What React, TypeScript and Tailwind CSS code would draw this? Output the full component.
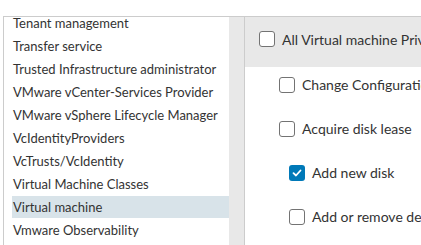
import React from "react";

const items = [
  "Tenant management",
  "Transfer service",
  "Trusted Infrastructure administrator",
  "VMware vCenter-Services Provider",
  "VMware vSphere Lifecycle Manager",
  "VcIdentityProviders",
  "VcTrusts/VcIdentity",
  "Virtual Machine Classes",
  "Virtual machine",
  "Vmware Observability",
];

function Box({ checked = false }: { checked?: boolean }) {
  if (checked) {
    return (
      <div className="w-[16px] h-[16px] shrink-0 rounded-[3px] bg-[#0079b8] flex items-center justify-center">
        <svg width="10" height="8" viewBox="0 0 10 8" fill="none">
          <path d="M1.5 4.2 L4 6.5 L8.5 1.5" stroke="white" strokeWidth="1.8" strokeLinecap="round" strokeLinejoin="round" />
        </svg>
      </div>
    );
  }
  return <div className="w-[16px] h-[16px] shrink-0 rounded-[3px] border border-[#737373] bg-white" />;
}

export default function App() {
  return (
    <div
      className="w-[421px] h-[245px] bg-white overflow-hidden pt-[16px] pl-[3px] text-[#333]"
      style={{ fontFamily: "Lato, 'Noto Sans', sans-serif" }}
    >
      <div className="flex h-full border-t border-l border-[#cccccc]">
        <div className="w-[225px] shrink-0 overflow-hidden pl-[8px]">
          <div className="-mt-[5px] flex flex-col gap-[1px]">
            {items.map((t) => (
              <div
                key={t}
                className={`h-[22px] leading-[22px] text-[13px] pl-[1px] whitespace-nowrap ${
                  t === "Virtual machine" ? "bg-[#d8e3e9]" : ""
                }`}
              >
                {t}
              </div>
            ))}
          </div>
        </div>
        <div className="w-[16px] shrink-0 bg-[#e8e8e8] border-r border-[#cccccc]" />
        <div className="flex-1 min-w-0 overflow-hidden">
          <div className="h-[50px] bg-[#e8e8e8] pt-[14px] pl-[14px] whitespace-nowrap">
            <div className="flex items-center gap-[7px] h-[16px] text-[14px]">
              <Box />
              <span>All Virtual machine Privileges</span>
            </div>
          </div>
          <div className="flex flex-col gap-[28px] pt-[10px] whitespace-nowrap text-[14px] leading-[16px]">
            <div className="flex items-center gap-[7px] pl-[34px]">
              <Box />
              <span>Change Configuration</span>
            </div>
            <div className="flex items-center gap-[7px] pl-[34px]">
              <Box />
              <span>Acquire disk lease</span>
            </div>
            <div className="flex items-center gap-[7px] pl-[44px]">
              <Box checked />
              <span>Add new disk</span>
            </div>
            <div className="flex items-center gap-[7px] pl-[44px]">
              <Box />
              <span>Add or remove device</span>
            </div>
          </div>
        </div>
      </div>
    </div>
  );
}
